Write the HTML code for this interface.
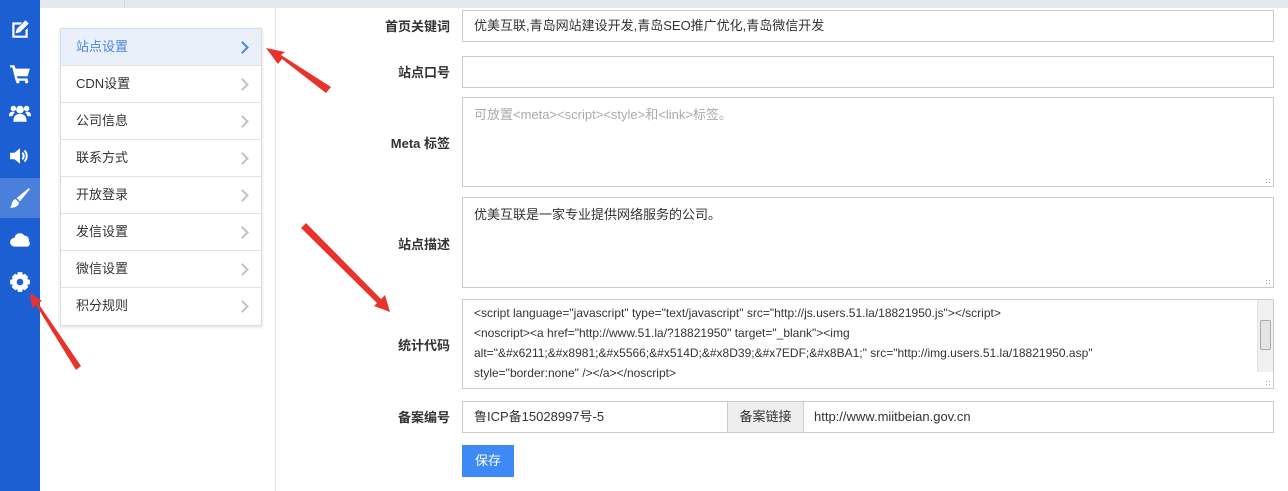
<!DOCTYPE html>
<html><head><meta charset="utf-8">
<style>
*{box-sizing:border-box;margin:0;padding:0}
body{width:1288px;height:491px;overflow:hidden;background:#fff;font-family:"Liberation Sans","Noto Sans CJK SC",sans-serif;font-size:13px;color:#333;position:relative}
.side{position:absolute;left:0;top:0;width:40px;height:491px;background:#1b5fd2}
.side .act{position:absolute;left:0;top:178px;width:40px;height:40px;background:#4a80dc}
.side svg{position:absolute;left:9px;width:22px;height:22px;fill:#fff}
.top{position:absolute;left:40px;top:0;width:1248px;height:8px;background:#e5e9ef}
.vl{position:absolute;left:275px;top:8px;width:1px;height:483px;background:#e3e3e3}
.vl2{position:absolute;left:124px;top:0;width:1px;height:8px;background:#d5d9df}
.menu{position:absolute;left:60px;top:28px;width:202px;border:1px solid #ddd;box-shadow:0 1px 3px rgba(0,0,0,.15);background:#fff}
.menu div{height:37px;line-height:36px;padding-left:15px;border-bottom:1px solid #e2e2e2;font-size:13px;color:#333;position:relative}
.menu div:last-child{border-bottom:none}
.menu div.on{background:#e9f0f9;color:#4a86e0}
.menu div::after{content:"";position:absolute;right:14px;top:14px;width:7px;height:7px;border-right:2px solid #c3c3c3;border-top:2px solid #c3c3c3;transform:rotate(45deg)}
.menu div.on::after{border-color:#4a86e0}
.lab{position:absolute;width:100px;left:350px;text-align:right;font-weight:bold;font-size:13px;color:#333}
.in{position:absolute;left:462px;width:812px;border:1px solid #ccc;background:#fff;padding:0 11px;font-size:13px}
.ta{padding-top:7px;line-height:20px}
.grip{position:absolute;right:2px;bottom:2px;width:6px;height:6px;background:radial-gradient(#aaa 30%,transparent 35%) 0 0/3px 3px}
.btn{position:absolute;left:462px;top:445px;width:52px;height:32px;background:#3d8af7;color:#fff;line-height:32px;text-align:center;font-size:13px}
</style></head><body>
<div class="top"></div><div class="vl2"></div><div class="vl"></div>
<div class="side">
<div class="act"></div>
<svg style="top:18px" viewBox="0 0 20 20"><path d="M3 4h9l-2 2H5v10h10v-5l2-2v9H3z"/><path d="M15 2l3 3-8 8-4 1 1-4z"/></svg>
<svg style="top:62px" viewBox="0 0 20 20"><path d="M1 3h4l1 3h13l-2 7H7l1 2h9v2H6L3 5H1z"/><circle cx="8" cy="18" r="1.5"/><circle cx="16" cy="18" r="1.5"/></svg>
<svg style="top:103px" viewBox="0 0 20 20"><circle cx="10" cy="6" r="3.5"/><circle cx="4" cy="5" r="2.5"/><circle cx="16" cy="5" r="2.5"/><path d="M4 17c0-5 2-7 6-7s6 2 6 7z"/><path d="M0 12c0-3 1-4 4-4 1 0 1 1 1 1-1 1-2 3-2 3zM20 12c0-3-1-4-4-4-1 0-1 1-1 1 1 1 2 3 2 3z"/></svg>
<svg style="top:145px" viewBox="0 0 20 20"><path d="M1 7h4l5-4v14l-5-4H1z"/><path d="M12 7a4 4 0 010 6M14 5a7 7 0 010 10" stroke="#fff" stroke-width="1.8" fill="none"/></svg>
<svg style="top:187px" viewBox="0 0 20 20"><path d="M18 1l1 1-9 11-3-3z"/><path d="M6 11l3 3c0 3-3 5-8 5 2-2 1-7 5-8z"/></svg>
<svg style="top:229px" viewBox="0 0 20 20"><path d="M5 16a4 4 0 010-8 5 5 0 019-2 4 4 0 014 5 3 3 0 01-1 5z"/></svg>
<svg style="top:271px" viewBox="0 0 20 20"><path d="M8 1h4l.5 2.5 2-1 3 3-1 2L19 8v4l-2.5.5 1 2-3 3-2-1L12 19H8l-.5-2.5-2 1-3-3 1-2L1 12V8l2.5-.5-1-2 3-3 2 1z"/><circle cx="10" cy="10" r="3" fill="#1b5fd2"/></svg>
</div>
<div class="menu">
<div class="on">站点设置</div><div>CDN设置</div><div>公司信息</div><div>联系方式</div><div>开放登录</div><div>发信设置</div><div>微信设置</div><div>积分规则</div>
</div>
<div class="lab" style="top:16px">首页关键词</div>
<div class="in" style="top:10px;height:32px;line-height:30px">优美互联,青岛网站建设开发,青岛SEO推广优化,青岛微信开发</div>
<div class="lab" style="top:62px">站点口号</div>
<div class="in" style="top:56px;height:32px"></div>
<div class="lab" style="top:133px">Meta 标签</div>
<div class="in ta" style="top:97px;height:90px;color:#aaa">可放置&lt;meta&gt;&lt;script&gt;&lt;style&gt;和&lt;link&gt;标签。<span class="grip"></span></div>
<div class="lab" style="top:234px">站点描述</div>
<div class="in ta" style="top:197px;height:91px">优美互联是一家专业提供网络服务的公司。<span class="grip"></span></div>
<div class="lab" style="top:335px">统计代码</div>
<div class="in ta" style="top:299px;height:90px;font-size:12px;padding-top:3px;line-height:20px;white-space:nowrap;overflow:hidden">&lt;script language="javascript" type="text/javascript" src="http://js.users.51.la/18821950.js"&gt;&lt;/script&gt;<br>&lt;noscript&gt;&lt;a href="http://www.51.la/?18821950" target="_blank"&gt;&lt;img<br>alt="&amp;#x6211;&amp;#x8981;&amp;#x5566;&amp;#x514D;&amp;#x8D39;&amp;#x7EDF;&amp;#x8BA1;" src="http://img.users.51.la/18821950.asp"<br>style="border:none" /&gt;&lt;/a&gt;&lt;/noscript&gt;
<div style="position:absolute;right:0;top:0;width:16px;height:72px;background:#f0f0f0;border-left:1px solid #e5e5e5"><div style="position:absolute;left:2px;top:20px;width:11px;height:30px;border:1px solid #aaa;background:#e4e4e4;border-radius:2px"></div></div><span class="grip"></span></div>
<div class="lab" style="top:407px">备案编号</div>
<div class="in" style="top:401px;height:32px;line-height:30px;padding:0">
<span style="position:absolute;left:11px">鲁ICP备15028997号-5</span>
<span style="position:absolute;left:264px;top:0;width:77px;height:30px;background:#eee;border-left:1px solid #ccc;border-right:1px solid #ccc;text-align:center">备案链接</span>
<span style="position:absolute;left:351px">http://www.miitbeian.gov.cn</span></div>
<div class="btn">保存</div>
<svg style="position:absolute;left:0;top:0" width="1288" height="491">
<g fill="#e8332d">
<polygon points="331,87 326,93 282,59 278,64 266,48 285,52 281,55"/>
<polygon points="301,228 306,223 381,299 385,295 390,312 374,306 377,303"/>
<polygon points="81,366 76,370 36,305 32,308 30,293 42,301 38,303"/>
</g></svg>
</body></html>
